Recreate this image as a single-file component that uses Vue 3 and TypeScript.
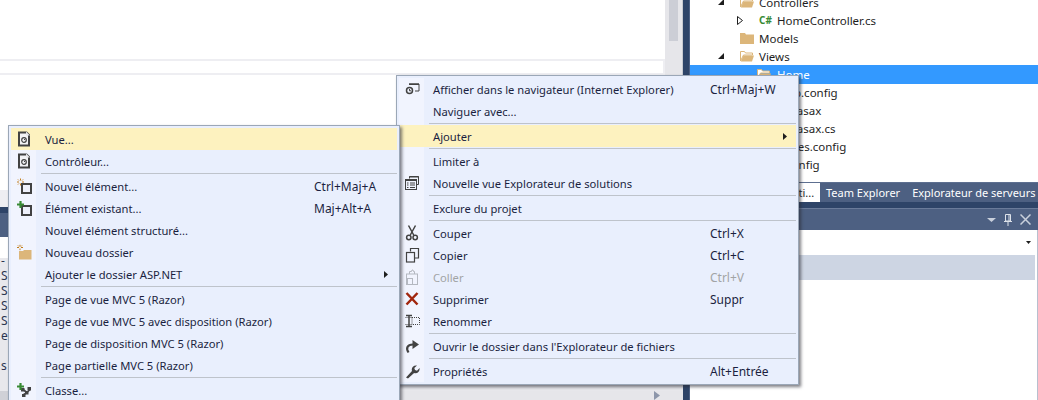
<script setup lang="ts">
interface Entry {
  label?: string
  icon?: string
  key?: string
  sub?: boolean
  hot?: boolean
  off?: boolean
  sep?: boolean
}

const page = '<path d="M3 1.500h7.500l2.500 2.500v10.500H3z" fill="#f3f3f6" stroke="#424242" stroke-width="2"/><path d="M10 0.500l4 4h-4z" fill="#e8e8ec"/><circle cx="8" cy="9" r="2.300" fill="none" stroke="#424242" stroke-width="1.200"/><path d="M8 9l1-1" stroke="#424242"/>'
const box = '<rect x="6" y="6" width="9" height="9" fill="#eef0fa" stroke="#424242" stroke-width="2"/>'
const spark = '<path d="M1 4h2M6 4h2M4.500 .5v2M4.500 5.500v2M2 1.500l1 1M7 1.500l-1 1M2 6.500l1-1" stroke="#c27d1a" stroke-width="1"/>'
const plus = '<path d="M1 4.500h7M4.500 1v7" stroke="#388a34" stroke-width="2.200"/>'

const icons: Record<string, string> = {
  page,
  newItem: box + spark,
  addItem: box + plus,
  folder: '<path d="M3 7h4l1-1h7.500v9.500H3z" fill="#dcb67a"/><path d="M1 3.500h2M5 3.500h2M4 .8v1.700M4 4.500v1.700M2 1.500l1 1M6 1.500l-1 1" stroke="#c27d1a"/>',
  cls: '<path d="M7 7.500l4 3M11 10.500l3-3M7 13l4-2.500" stroke="#424242" stroke-width="1.600"/><rect x="5" y="6" width="3.500" height="3.500" fill="#424242"/><rect x="11.500" y="5" width="3.500" height="3.500" fill="#424242"/><rect x="9" y="9" width="3.500" height="3.500" fill="#424242"/><rect x="6" y="12" width="3.500" height="3" fill="#424242"/>' + plus,
  browser: '<path d="M5 3h10v7h-4" fill="none" stroke="#424242" stroke-width="1"/><path d="M5 2.500h10v1.500H5z" fill="#424242"/><circle cx="5.500" cy="9.500" r="3" fill="#f0f3fd" stroke="#424242" stroke-width="1.500"/><path d="M5.500 8v1.800h1.600" fill="none" stroke="#424242"/>',
  explorer: '<path d="M5.500 3.500V1.500h9v8h-2" fill="none" stroke="#424242"/><path d="M5.500 1h9v1.500h-9z" fill="#424242"/><rect x="1.500" y="4.500" width="11" height="10" fill="#f0f3fd" stroke="#424242"/><path d="M1 4h12v2H1z" fill="#424242"/><path d="M3 8h1.500M6 8h5M3 10h1.500M6 10h5M3 12.500h1.500M6 12.500h5" stroke="#424242"/>',
  cut: '<path d="M4.500 .5l5.200 9.500M11.500 .5L6.300 10" fill="none" stroke="#424242" stroke-width="1.500"/><circle cx="4.800" cy="12.500" r="2.200" fill="none" stroke="#424242" stroke-width="1.500"/><circle cx="11.200" cy="12.500" r="2.200" fill="none" stroke="#424242" stroke-width="1.500"/>',
  copy: '<path d="M6.500 4.500v-3h8v9.500h-4" fill="none" stroke="#424242" stroke-width="1.200"/><rect x="2.500" y="5.500" width="8" height="9.500" fill="none" stroke="#424242" stroke-width="1.200"/>',
  paste: '<g fill="none" stroke="#b4b8c0"><rect x="2.500" y="5" width="11" height="10.500"/><path d="M5.500 5V2.500h2l.500-1.500h1l.500 1.500h1V5"/><rect x="3.500" y="9.500" width="5" height="6"/></g>',
  del: '<path d="M2.500 2l11 11.500M13.500 2l-11 11.500" stroke="#a1260d" stroke-width="2.500"/>',
  rename: '<path d="M2 2.500h6M2 13.500h6M5 2.500v11" fill="none" stroke="#424242" stroke-width="1.500"/><rect x="8" y="4.500" width="7.500" height="7" fill="none" stroke="#424242" stroke-dasharray="1 1"/><path d="M1.500 4.500H8M1.500 11.500H8" stroke="#424242" stroke-dasharray="1 1"/>',
  open: '<path d="M4.500 14.500C1.800 10.500 3 6.500 9 6.500" fill="none" stroke="#424242" stroke-width="2.200"/><path d="M8.500 2l6.500 4.500L8.500 11z" fill="#424242"/>',
  wrench: '<path d="M2 14.500l6-6.500c-1-3 1.200-6 5-5.500l-2.700 2.600.7 2 2 .6 2.600-2.600c.5 3.500-2.500 6-5.500 5L4 15.500z" fill="#424242"/>'
}

const addMenu: Entry[] = [
  { label: 'Vue...', icon: 'page', hot: true },
  { label: 'Contrôleur...', icon: 'page' },
  { sep: true },
  { label: 'Nouvel élément...', icon: 'newItem', key: 'Ctrl+Maj+A' },
  { label: 'Élément existant...', icon: 'addItem', key: 'Maj+Alt+A' },
  { label: 'Nouvel élément structuré...' },
  { label: 'Nouveau dossier', icon: 'folder' },
  { label: 'Ajouter le dossier ASP.NET', sub: true },
  { sep: true },
  { label: 'Page de vue MVC 5 (Razor)' },
  { label: 'Page de vue MVC 5 avec disposition (Razor)' },
  { label: 'Page de disposition MVC 5 (Razor)' },
  { label: 'Page partielle MVC 5 (Razor)' },
  { sep: true },
  { label: 'Classe...', icon: 'cls' }
]

const folderMenu: Entry[] = [
  { label: 'Afficher dans le navigateur (Internet Explorer)', icon: 'browser', key: 'Ctrl+Maj+W' },
  { label: 'Naviguer avec...' },
  { sep: true },
  { label: 'Ajouter', hot: true, sub: true },
  { sep: true },
  { label: 'Limiter à' },
  { label: 'Nouvelle vue Explorateur de solutions', icon: 'explorer' },
  { sep: true },
  { label: 'Exclure du projet' },
  { sep: true },
  { label: 'Couper', icon: 'cut', key: 'Ctrl+X' },
  { label: 'Copier', icon: 'copy', key: 'Ctrl+C' },
  { label: 'Coller', icon: 'paste', key: 'Ctrl+V', off: true },
  { label: 'Supprimer', icon: 'del', key: 'Suppr' },
  { label: 'Renommer', icon: 'rename' },
  { sep: true },
  { label: "Ouvrir le dossier dans l'Explorateur de fichiers", icon: 'open' },
  { sep: true },
  { label: 'Propriétés', icon: 'wrench', key: 'Alt+Entrée' }
]

const menus = [
  { id: 'folder-menu', items: folderMenu },
  { id: 'add-menu', items: addMenu }
]

const outputLines = ['-', 'S', 'S', 'S', 'S', 'e', '\u00a0', 's']
</script>

<template>
  <div class="screen">
    <section class="workspace">
      <div class="editor">
        <div class="document">
          <div class="find-bar"></div>
        </div>
        <div class="vscroll"><div class="vthumb"></div></div>
      </div>
      <div class="tab-well"></div>
      <div class="navy-band"></div>
      <div class="pane-title"></div>
      <div class="pane-white"></div>
      <div class="pane-list">
        <div v-for="(line, i) in outputLines" :key="i" class="pane-line">{{ line }}</div>
      </div>
      <div class="hscroll">
        <div class="hthumb"></div>
        <svg class="harrow" width="6" height="9" viewBox="0 0 6 9"><path d="M0 0l6 4.500L0 9z" fill="#8d96aa" /></svg>
      </div>
    </section>

    <div class="splitter"></div>

    <aside class="side">
      <div class="tree">
        <div class="tree-row lvl1">
          <svg class="exp" width="6" height="6" viewBox="0 0 6 6"><path d="M6 0v6H0z" fill="#1e1e1e" /></svg>
          <svg class="folder" width="14" height="12" viewBox="0 0 14 12"><path d="M.5 1.500h4l1 1.500h7v2h-9l-3 6z" fill="#fff" stroke="#dcb67a" /><path d="M3.500 5.500H14l-2 6H.8z" fill="#dcb67a" /></svg>
          <span>Controllers</span>
        </div>
        <div class="tree-row lvl2">
          <svg class="exp2" width="6" height="9" viewBox="0 0 6 9"><path d="M.5 .5l5 4-5 4z" fill="#fff" stroke="#1e1e1e" /></svg>
          <b class="cs">C#</b>
          <span>HomeController.cs</span>
        </div>
        <div class="tree-row lvl1 noexp">
          <svg class="folder" width="14" height="12" viewBox="0 0 14 12"><path d="M0 1h5l1 1.500h8V12H0z" fill="#dcb67a" /></svg>
          <span>Models</span>
        </div>
        <div class="tree-row lvl1">
          <svg class="exp" width="6" height="6" viewBox="0 0 6 6"><path d="M6 0v6H0z" fill="#1e1e1e" /></svg>
          <svg class="folder" width="14" height="12" viewBox="0 0 14 12"><path d="M.5 1.500h4l1 1.500h7v2h-9l-3 6z" fill="#fff" stroke="#dcb67a" /><path d="M3.500 5.500H14l-2 6H.8z" fill="#dcb67a" /></svg>
          <span>Views</span>
        </div>
        <div class="tree-row lvl2 selected">
          <svg class="folder sel-folder" width="14" height="12" viewBox="0 0 14 12"><path d="M.5 1.500h4l1 1.500h7v2h-9l-3 6z" fill="#fff" stroke="#dcb67a" /><path d="M3.500 5.500H14l-2 6H.8z" fill="#dcb67a" /></svg>
          <span>Home</span>
        </div>
        <div class="tree-row lvl2 plain"><span>Web.config</span></div>
        <div class="tree-row lvl1 plain"><span>Global.asax</span></div>
        <div class="tree-row lvl1 plain"><span>Global.asax.cs</span></div>
        <div class="tree-row lvl1 plain"><span>packages.config</span></div>
        <div class="tree-row lvl1 plain"><span>Web.config</span></div>
      </div>
      <div class="tabs">
        <div class="tab active">Explorateur de soluti...</div>
        <div class="tab">Team Explorer</div>
        <div class="tab">Explorateur de serveurs</div>
      </div>
      <div class="navy-band"></div>
      <div class="props-title">
        <svg width="9" height="4" viewBox="0 0 9 4"><path d="M0 0h9L4.500 4z" fill="#c9d0dc" /></svg>
        <svg width="8" height="12" viewBox="0 0 8 12"><path d="M1.500 .5h5v6.500h-5zM0 7.500h8M4 8v4M5 1v6" fill="none" stroke="#dde2ea" /></svg>
        <svg width="11" height="11" viewBox="0 0 11 11"><path d="M.5 .5l10 10M10.500 .5l-10 10" stroke="#c9d0dc" stroke-width="1.500" /></svg>
      </div>
      <div class="props-body">
        <div class="combo">
          <svg width="5" height="3" viewBox="0 0 5 3"><path d="M0 0h5L2.500 3z" fill="#1e1e1e" /></svg>
        </div>
        <div class="props-row"></div>
      </div>
    </aside>

    <nav v-for="menu in menus" :key="menu.id" class="menu" :class="menu.id">
      <template v-for="(item, i) in menu.items" :key="i">
        <div v-if="item.sep" class="separator"></div>
        <div v-else class="item" :class="{ hot: item.hot, off: item.off }">
          <svg class="icon" width="16" height="16" viewBox="0 0 16 16" v-html="item.icon ? icons[item.icon] : ''"></svg>
          <span class="label">{{ item.label }}</span>
          <span v-if="item.key" class="key">{{ item.key }}</span>
          <svg v-if="item.sub" class="arrow" width="4" height="7" viewBox="0 0 4 7"><path d="M0 0l4 3.500L0 7z" fill="#1e1e1e" /></svg>
        </div>
      </template>
    </nav>
  </div>
</template>

<style>
body {
  margin: 0;
}
</style>

<style scoped>
.screen {
  position: relative;
  display: flex;
  width: 1038px;
  height: 400px;
  overflow: hidden;
  background: #fff;
  font-family: "Noto Sans", "Open Sans", sans-serif;
  font-size: 11.5px;
  color: #1e1e1e;
}

.workspace {
  display: flex;
  flex-direction: column;
  width: 683px;
  flex: none;
}

.editor {
  display: flex;
  height: 190px;
  flex: none;
}

.document {
  flex: 1;
  padding-top: 59px;
}

.find-bar {
  height: 12px;
  border: solid #eeeef2;
  border-width: 2px 2px 2px 0;
}

.vscroll {
  width: 18px;
  box-sizing: border-box;
  padding: 0 4px;
  background: #e6e6ea;
  border-right: 1px solid #c8cad0;
}

.vthumb {
  height: 41px;
  background: #ccced6;
}

.tab-well {
  height: 17px;
  flex: none;
  background: #eeeef2;
}

.navy-band {
  height: 6px;
  flex: none;
  background: #2e4468;
}

.pane-title {
  height: 24px;
  flex: none;
  background: #4d6082;
}

.pane-white {
  height: 21px;
  flex: none;
  background: #fff;
}

.pane-list {
  flex: 1;
  min-height: 0;
  background: #e8e8ec;
  padding-left: 1px;
}

.pane-line {
  height: 15px;
  line-height: 15px;
  font-size: 12px;
  position: relative;
  top: -5px;
  color: #2b3550;
}

.hscroll {
  position: relative;
  height: 9px;
  flex: none;
  background: #e6e6ea;
}

.hthumb {
  width: 60px;
  height: 100%;
  background: #d0d1d7;
}

.harrow {
  position: absolute;
  left: 654px;
  top: 0;
}

.splitter {
  width: 6px;
  flex: none;
  background: #2e4468;
}

.side {
  flex: 1;
  min-width: 0;
  display: flex;
  flex-direction: column;
  border-left: 1px solid #4d6082;
}

.tree {
  height: 182px;
  flex: none;
  overflow: hidden;
}

.tree-row {
  position: relative;
  top: -7px;
  display: flex;
  align-items: center;
  height: 18px;
  color: #1e1e1e;
}

.tree-row.lvl1 {
  padding-left: 28px;
}

.tree-row.lvl1.noexp {
  padding-left: 50px;
}

.tree-row.lvl1.plain {
  padding-left: 69px;
}

.tree-row.lvl2 {
  padding-left: 47px;
}

.tree-row.lvl2.plain {
  padding-left: 87px;
}

.tree-row.selected {
  padding-left: 67px;
  background: #3399ff;
  color: #fff;
  box-shadow: 0 1px 0 #3399ff;
}

.exp {
  margin-right: 16px;
}

.exp2 {
  margin-right: 16px;
}

.folder {
  margin-right: 5px;
}

.sel-folder {
  margin-right: 6px;
}

.cs {
  width: 18px;
  flex: none;
  font-size: 10px;
  color: #388a34;
  font-weight: 700;
}

.tabs {
  display: flex;
  height: 20px;
  flex: none;
  background: #4d6082;
  color: #fff;
  font-size: 11px;
  line-height: 20px;
  border-top: 1px solid #5d6f90;
  box-sizing: border-box;
}

.tab {
  padding: 0 6px;
  white-space: nowrap;
}

.tab.active {
  width: 130px;
  padding-left: 8px;
  flex: none;
  box-sizing: border-box;
  overflow: hidden;
  background: #fff;
  color: #1e1e1e;
}

.props-title {
  display: flex;
  align-items: center;
  justify-content: flex-end;
  gap: 8px;
  height: 22px;
  flex: none;
  padding-right: 7px;
  box-sizing: border-box;
  background: #4d6082;
  border-top: 1px solid #6a7b9a;
}

.props-body {
  flex: 1;
  padding-right: 2px;
  border-right: 1px solid #b8c0cf;
}

.combo {
  display: flex;
  align-items: center;
  justify-content: flex-end;
  height: 25px;
  padding-right: 4px;
}

.props-row {
  height: 25px;
  background: #cdd5e3;
}

.menu {
  position: absolute;
  padding: 2px;
  border: 1px solid #9ba7b7;
  box-shadow: 2px 2px 3px rgba(40, 40, 50, 0.6);
  background: #e9effd;
}

.folder-menu {
  left: 396px;
  top: 75px;
  width: 397px;
}

.add-menu {
  left: 8px;
  top: 125px;
  width: 386px;
}

.item {
  display: flex;
  align-items: center;
  height: 22px;
  color: #1b1f3f;
  white-space: nowrap;
  background: linear-gradient(90deg, #f1f4fe 25px, transparent 25px);
}

.item.hot {
  background: #fdf2bf;
}

.item.off {
  color: #a2a4a5;
}

.icon {
  flex: none;
  margin: 0 13px 0 5px;
}

.label {
  flex: none;
  font-size: 11.2px;
}

.folder-menu .label {
  width: 277px;
}

.add-menu .label {
  width: 269px;
}

.key {
  font-size: 12px;
}

.arrow {
  flex: none;
  margin-left: auto;
  margin-right: 9px;
}

.separator {
  height: 3px;
  background:
    linear-gradient(#bec3cb, #bec3cb) 30px 1px / 100% 1px no-repeat,
    linear-gradient(90deg, #f1f4fe 25px, transparent 25px);
}
</style>
